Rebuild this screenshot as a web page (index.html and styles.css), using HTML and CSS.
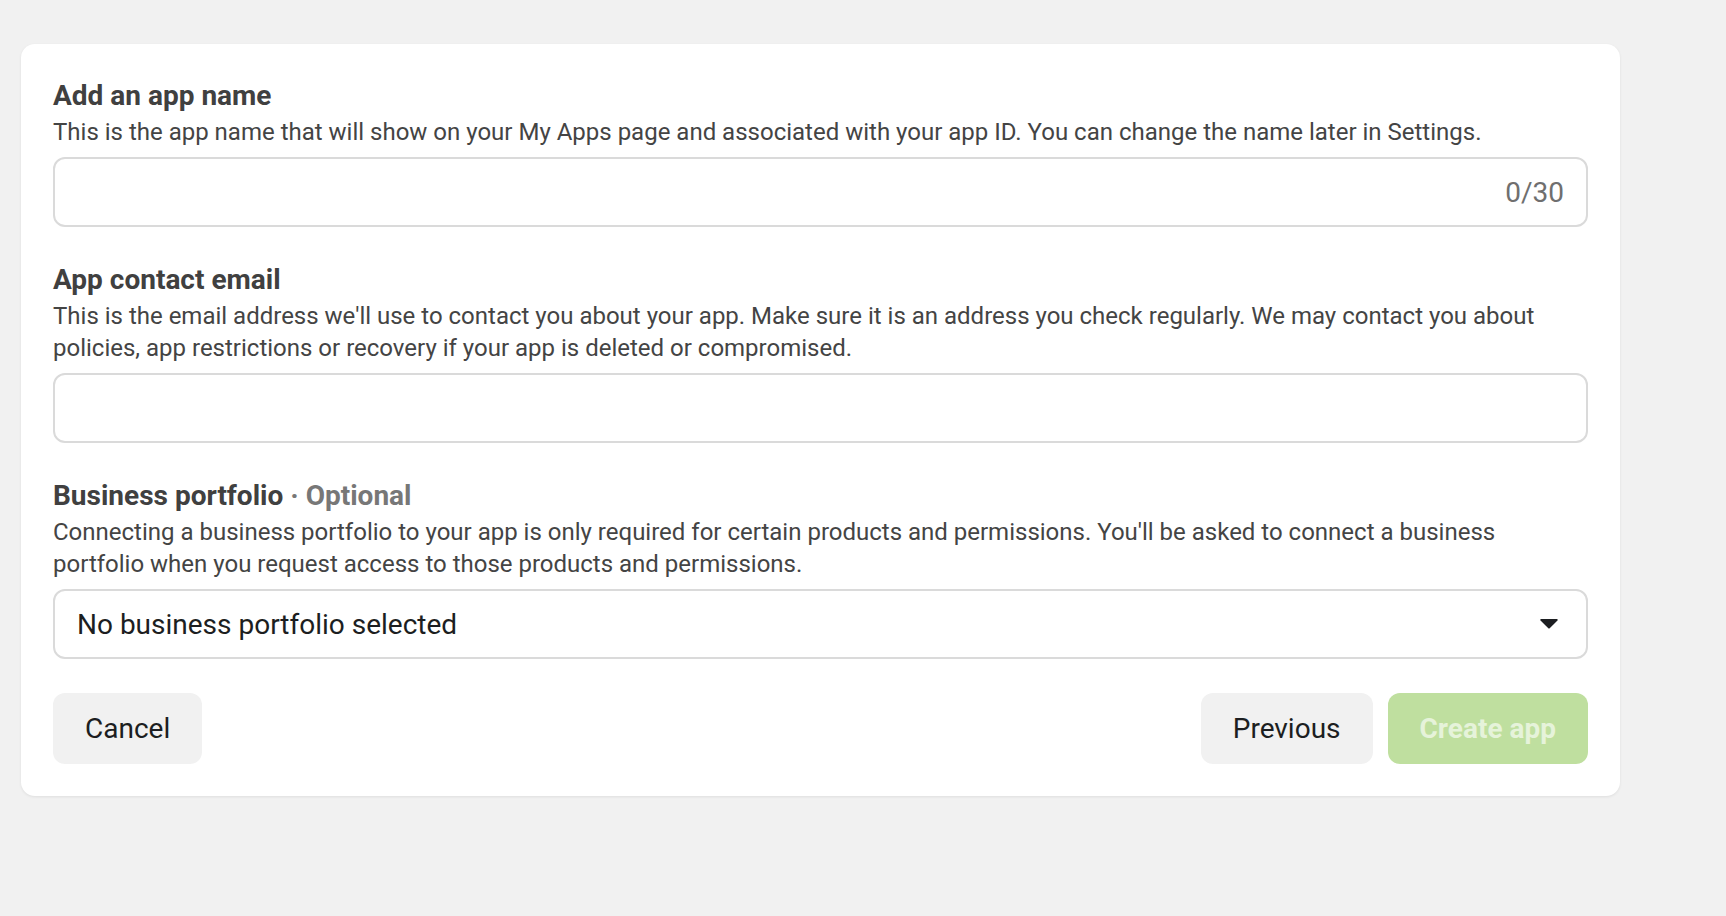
FILE: index.html
```html
<!DOCTYPE html>
<html lang="en">
<head>
<meta charset="utf-8">
<title>Create app</title>
<link rel="stylesheet" href="styles.css">
</head>
<body>
<div class="page">
  <div class="card">
    <section class="field">
      <h2 class="field-title">Add an app name</h2>
      <p class="field-desc">This is the app name that will show on your My Apps page and associated with your app ID. You can change the name later in Settings.</p>
      <div class="input">
        <span class="input-value"></span>
        <span class="counter">0/30</span>
      </div>
    </section>
    <section class="field">
      <h2 class="field-title">App contact email</h2>
      <p class="field-desc">This is the email address we'll use to contact you about your app. Make sure it is an address you check regularly. We may contact you about policies, app restrictions or recovery if your app is deleted or compromised.</p>
      <div class="input">
        <span class="input-value"></span>
      </div>
    </section>
    <section class="field">
      <h2 class="field-title">Business portfolio <span class="optional">· Optional</span></h2>
      <p class="field-desc">Connecting a business portfolio to your app is only required for certain products and permissions. You'll be asked to connect a business portfolio when you request access to those products and permissions.</p>
      <div class="input select">
        <span class="select-value">No business portfolio selected</span>
        <svg class="caret" width="20" height="12" viewBox="0 0 20 12" aria-hidden="true"><path d="M2.2 1h15.6c.9 0 1.3 1 .7 1.6l-7.8 7.7c-.4.4-1 .4-1.4 0L1.5 2.6C.9 2 1.3 1 2.2 1z" fill="#1c1e21"/></svg>
      </div>
    </section>
    <div class="actions">
      <button class="btn btn-secondary">Cancel</button>
      <div class="actions-right">
        <button class="btn btn-secondary">Previous</button>
        <button class="btn btn-primary" disabled>Create app</button>
      </div>
    </div>
  </div>
</div>
</body>
</html>
```
FILE: styles.css
```css
html, body {
  margin: 0;
  padding: 0;
}
body {
  background: #f1f1f1;
  font-family: Roboto, "Liberation Sans", Arial, sans-serif;
  color: #444950;
  width: 1726px;
  height: 916px;
  overflow: hidden;
}
.page {
  padding: 44px 0 0 21px;
}
.card {
  width: 1599px;
  box-sizing: border-box;
  background: #fff;
  border-radius: 14px;
  box-shadow: 0 1px 3px rgba(0, 0, 0, 0.08);
  padding: 36px 32px 32px 32px;
  display: flex;
  flex-direction: column;
  gap: 37px;
}
.field {
  display: flex;
  flex-direction: column;
}
.field-title {
  margin: 0 0 4px 0;
  font-size: 28px;
  line-height: 32px;
  font-weight: 700;
  color: #404040;
}
.optional {
  color: #777;
  font-weight: 700;
}
.field-desc {
  margin: 0 0 9px 0;
  font-size: 24px;
  line-height: 32px;
  color: #444;
}
.input {
  height: 70px;
  box-sizing: border-box;
  border: 2px solid #dadada;
  border-radius: 12px;
  display: flex;
  align-items: center;
  justify-content: space-between;
  padding: 0 22px;
}
.counter {
  font-size: 28px;
  color: #6f6f6f;
}
.select {
  padding: 0 27px 0 22px;
}
.select-value {
  font-size: 28px;
  color: #1c1e21;
}
.caret {
  display: block;
}
.actions {
  display: flex;
  justify-content: space-between;
  align-items: center;
  margin-top: -3px;
}
.actions-right {
  display: flex;
  gap: 15px;
}
.btn {
  height: 71px;
  border: none;
  border-radius: 12px;
  font-family: Roboto, "Liberation Sans", Arial, sans-serif;
  font-size: 28px;
  padding: 0 32px;
  cursor: pointer;
}
.btn-secondary {
  background: #f1f1f1;
  color: #1c1e21;
}
.btn-primary {
  background: #bfdf9f;
  color: #e6f3da;
  font-weight: 700;
}
```
